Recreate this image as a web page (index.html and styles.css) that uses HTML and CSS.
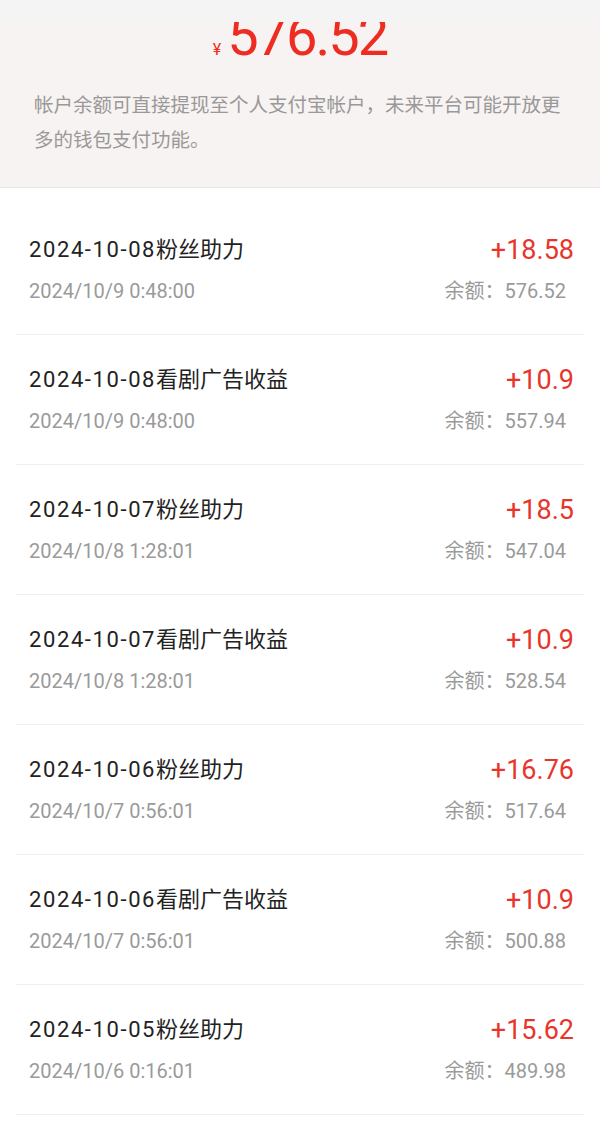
FILE: index.html
```html
<!DOCTYPE html>
<html lang="zh-CN">
<head>
    <meta charset="UTF-8">
    <meta name="viewport" content="width=device-width, initial-scale=1.0">
    <title>账户余额</title>
    <link rel="stylesheet" href="styles.css">
</head>
<body>
    <div class="status-bar"></div>

    <div class="summary">
        <div class="balance"><span class="currency">¥</span>576.52</div>
        <p class="summary-note">帐户余额可直接提现至个人支付宝帐户，未来平台可能开放更多的钱包支付功能。</p>
    </div>

    <ul class="records">
        <li class="record">
            <div class="record-line">
                <span class="record-title"><span class="record-date">2024-10-08</span>粉丝助力</span>
                <span class="record-amount">+18.58</span>
            </div>
            <div class="record-line">
                <span class="record-time">2024/10/9 0:48:00</span>
                <span class="record-balance">余额：576.52</span>
            </div>
        </li>
        <li class="record">
            <div class="record-line">
                <span class="record-title"><span class="record-date">2024-10-08</span>看剧广告收益</span>
                <span class="record-amount">+10.9</span>
            </div>
            <div class="record-line">
                <span class="record-time">2024/10/9 0:48:00</span>
                <span class="record-balance">余额：557.94</span>
            </div>
        </li>
        <li class="record">
            <div class="record-line">
                <span class="record-title"><span class="record-date">2024-10-07</span>粉丝助力</span>
                <span class="record-amount">+18.5</span>
            </div>
            <div class="record-line">
                <span class="record-time">2024/10/8 1:28:01</span>
                <span class="record-balance">余额：547.04</span>
            </div>
        </li>
        <li class="record">
            <div class="record-line">
                <span class="record-title"><span class="record-date">2024-10-07</span>看剧广告收益</span>
                <span class="record-amount">+10.9</span>
            </div>
            <div class="record-line">
                <span class="record-time">2024/10/8 1:28:01</span>
                <span class="record-balance">余额：528.54</span>
            </div>
        </li>
        <li class="record">
            <div class="record-line">
                <span class="record-title"><span class="record-date">2024-10-06</span>粉丝助力</span>
                <span class="record-amount">+16.76</span>
            </div>
            <div class="record-line">
                <span class="record-time">2024/10/7 0:56:01</span>
                <span class="record-balance">余额：517.64</span>
            </div>
        </li>
        <li class="record">
            <div class="record-line">
                <span class="record-title"><span class="record-date">2024-10-06</span>看剧广告收益</span>
                <span class="record-amount">+10.9</span>
            </div>
            <div class="record-line">
                <span class="record-time">2024/10/7 0:56:01</span>
                <span class="record-balance">余额：500.88</span>
            </div>
        </li>
        <li class="record">
            <div class="record-line">
                <span class="record-title"><span class="record-date">2024-10-05</span>粉丝助力</span>
                <span class="record-amount">+15.62</span>
            </div>
            <div class="record-line">
                <span class="record-time">2024/10/6 0:16:01</span>
                <span class="record-balance">余额：489.98</span>
            </div>
        </li>
    </ul>
</body>
</html>
```

FILE: styles.css
```css
body {
    margin: 0;
    background-color: #fff;
    font-family: Roboto, "Noto Sans CJK SC", sans-serif;
    color: #222;
}
.status-bar {
    position: fixed;
    top: 0;
    left: 0;
    right: 0;
    height: 22px;
    background-color: #f4f4f4;
    z-index: 10;
}
.summary {
    background-color: #f6f3f2;
    padding: 8px 34px 29px;
    border-bottom: 1px solid #e9e7e6;
}
.balance {
    text-align: center;
    color: #ee2d22;
    font-size: 56px;
    line-height: 56px;
    letter-spacing: -2px;
}
.currency {
    font-size: 16px;
    line-height: 1;
    letter-spacing: 0;
    margin-right: 6px;
}
.summary-note {
    margin: 24px 0 0;
    font-size: 19.5px;
    line-height: 35px;
    color: #9b9898;
}
.records {
    list-style: none;
    margin: 0;
    padding: 17px 16px 0;
}
.record {
    padding: 30px 10px 30px 13px;
    border-bottom: 1px solid #efefef;
    display: flex;
    flex-direction: column;
    gap: 13px;
}
.record-line {
    display: flex;
    justify-content: space-between;
    align-items: center;
}
.record-title {
    font-size: 22px;
    line-height: 30px;
    color: #222;
}
.record-date {
    letter-spacing: 1.6px;
}
.record-amount {
    font-size: 27px;
    line-height: 30px;
    color: #e8352c;
}
.record-time,
.record-balance {
    font-size: 20px;
    line-height: 26px;
    color: #9a9a9a;
}
.record-balance {
    margin-right: 8px;
}
```
